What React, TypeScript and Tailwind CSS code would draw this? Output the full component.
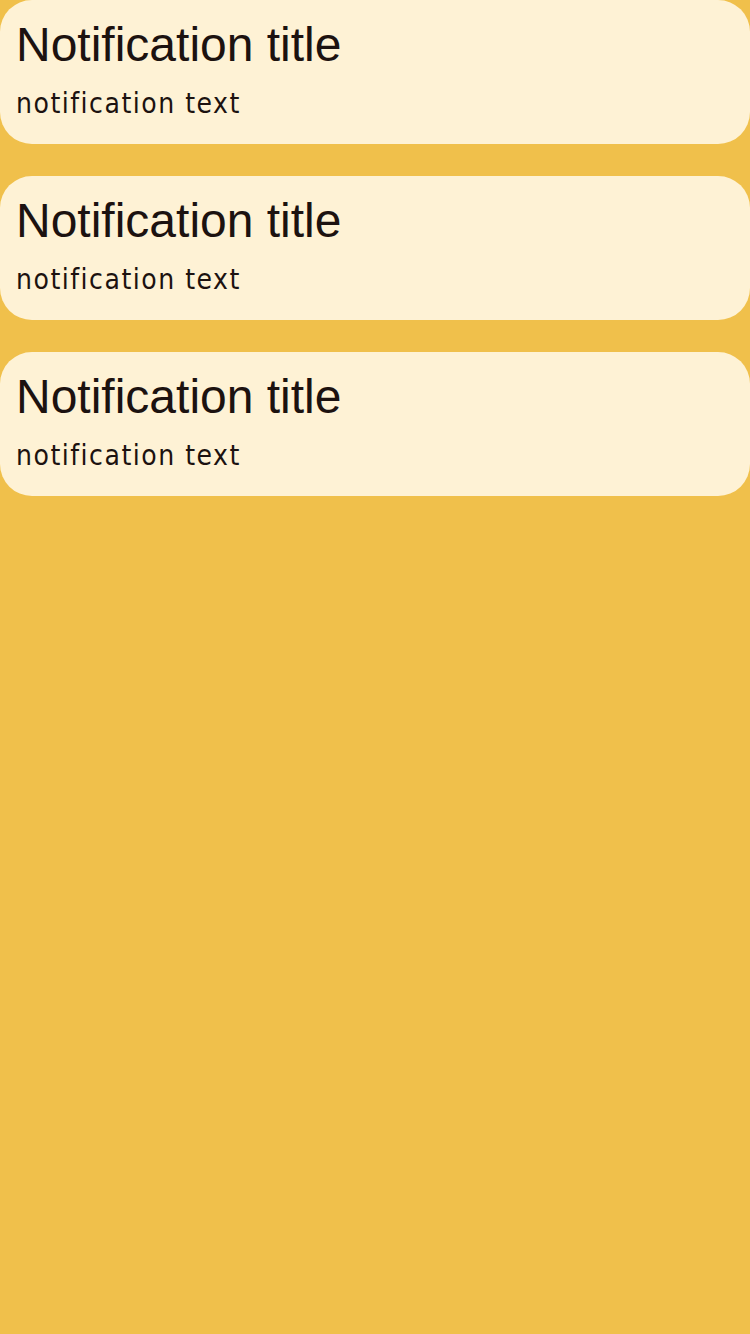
const cards = [
  { title: "Notification title", text: "notification text" },
  { title: "Notification title", text: "notification text" },
  { title: "Notification title", text: "notification text" },
];

export default function App() {
  return (
    <div className="min-h-[1334px] w-[750px] bg-[#f0c04b] flex flex-col gap-8">
      {cards.map((c, i) => (
        <div key={i} className="h-[144px] rounded-[32px] bg-[#fef2d5] px-4 pt-[17px] text-[#1c1210] flex flex-col">
          <div className="font-['Liberation_Sans',Arial,sans-serif] text-[48px] leading-[56px]">
            {c.title}
          </div>
          <div className="font-['DejaVu_Sans_Condensed','DejaVu_Sans',sans-serif] text-[28px] tracking-[1.5px] leading-[34px] mt-[14px]">
            {c.text}
          </div>
        </div>
      ))}
    </div>
  );
}
